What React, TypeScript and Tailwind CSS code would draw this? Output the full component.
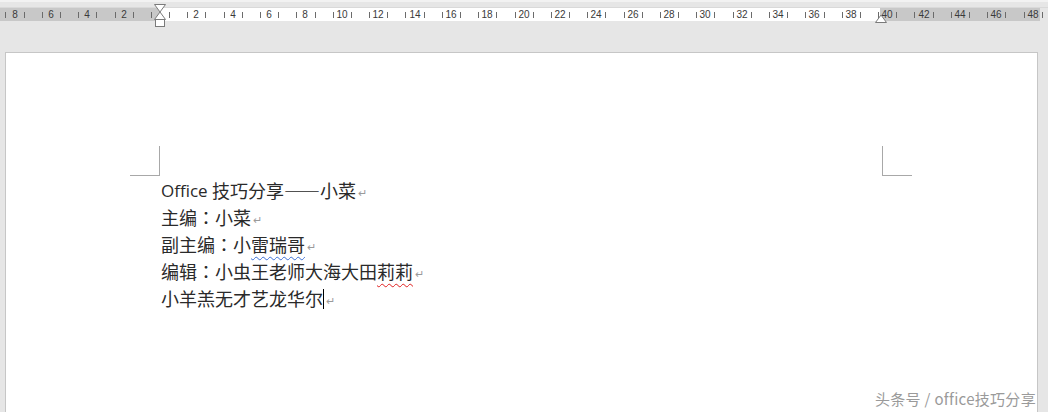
import React from 'react';

const UNIT = 18.18;
const ZERO = 160;

const labels: number[] = [];
for (let n = -8; n <= 48; n += 2) if (n !== 0) labels.push(n);
const ticks: number[] = [];
for (let n = -9; n <= 48; n += 1) ticks.push(n + 0.5);

function Ruler() {
  return (
    <div className="relative h-[13px] w-[1040px] flex">
      <div className="w-[160px] h-full bg-[#c8c8c8]" />
      <div className="w-[720px] h-full bg-white" />
      <div className="flex-1 h-full bg-[#c8c8c8]" />
      {ticks.map((t) => (
        <div
          key={t}
          className="absolute top-[4px] w-px h-[6px] bg-[#6b6b6b]"
          style={{ left: Math.round(ZERO + t * UNIT) }}
        />
      ))}
      {labels.map((n) => (
        <span
          key={n}
          className="absolute top-0 h-[13px] leading-[13px] text-[10px] text-[#3a3a3a] -translate-x-1/2 font-['Liberation_Sans',sans-serif]"
          style={{ left: Math.round(ZERO + n * UNIT) }}
        >
          {Math.abs(n)}
        </span>
      ))}
      {/* first-line / hanging indent marker */}
      <svg className="absolute left-[154px] top-[-4px]" width="12" height="25" viewBox="0 0 12 25">
        <path d="M0.5 0.5 H11.5 L6 8 Z" fill="#fff" stroke="#7a7a7a" />
        <path d="M6 8 L11.5 15.5 H0.5 Z" fill="#fff" stroke="#7a7a7a" />
        <rect x="1.5" y="15.5" width="9" height="7" fill="#fff" stroke="#7a7a7a" />
      </svg>
      {/* right indent marker */}
      <svg className="absolute left-[875px] top-[5px]" width="12" height="10" viewBox="0 0 12 10">
        <path d="M0.5 9.5 L6 2 L11.5 9.5 Z" fill="#fff" stroke="#7a7a7a" />
      </svg>
    </div>
  );
}

function Mark() {
  return <span className="text-[#9a9a9a] text-[11px] leading-none ml-[2px] mt-[3px]">↵</span>;
}

function Colon() {
  return <span className="font-['Noto_Sans_CJK_JP',sans-serif]">：</span>;
}

function Line({ children }: { children: React.ReactNode }) {
  return <div className="h-[27px] flex items-center whitespace-pre">{children}</div>;
}

export default function App() {
  return (
    <div
      lang="zh-CN"
      className="w-[1048px] h-[412px] overflow-hidden bg-[#e6e6e6] font-['Noto_Sans_CJK_SC','Noto_Sans',sans-serif]"
    >
      <div className="h-[8px] border-t-[2px] border-[#f2f2f2] bg-[#e6e6e6] border-b border-b-[#d9d9d9]" />
      <Ruler />
      <div className="h-[31px]" />
      <div className="ml-[5px] w-[1033px] h-[400px] bg-white border border-[#c6c6c6] relative">
        {/* crop marks */}
        <div className="absolute left-[124px] top-[93px] w-[30px] h-[30px] border-r border-b border-[#a8a8a8]" />
        <div className="absolute left-[876px] top-[93px] w-[30px] h-[30px] border-l border-b border-[#a8a8a8]" />
        <div className="pt-[124px] pl-[155px] text-[18px] leading-[27px] text-[#2a2a2a]">
          <Line>
            <span className="font-['Open_Sans','Noto_Sans',sans-serif] text-[17px]">Office </span>
            <span>技巧分享——小菜</span>
            <Mark />
          </Line>
          <Line>
            <span>主编</span>
            <Colon />
            <span>小菜</span>
            <Mark />
          </Line>
          <Line>
            <span>副主编</span>
            <Colon />
            <span>小</span>
            <span className="underline decoration-wavy decoration-[#3b6fd6] decoration-1 underline-offset-[4px]">雷瑞哥</span>
            <Mark />
          </Line>
          <Line>
            <span>编辑</span>
            <Colon />
            <span>小虫王老师大海大田</span>
            <span className="underline decoration-wavy decoration-[#e02020] decoration-1 underline-offset-[4px]">莉莉</span>
            <Mark />
          </Line>
          <Line>
            <span>小羊羔无才艺龙华尔</span>
            <span className="inline-block w-px h-[20px] bg-black" />
            <Mark />
          </Line>
        </div>
        <div className="absolute left-[869px] top-[335px] text-[15px] tracking-[0.3px] text-[#9a9a9a]">
          头条号 / office技巧分享
        </div>
      </div>
    </div>
  );
}
